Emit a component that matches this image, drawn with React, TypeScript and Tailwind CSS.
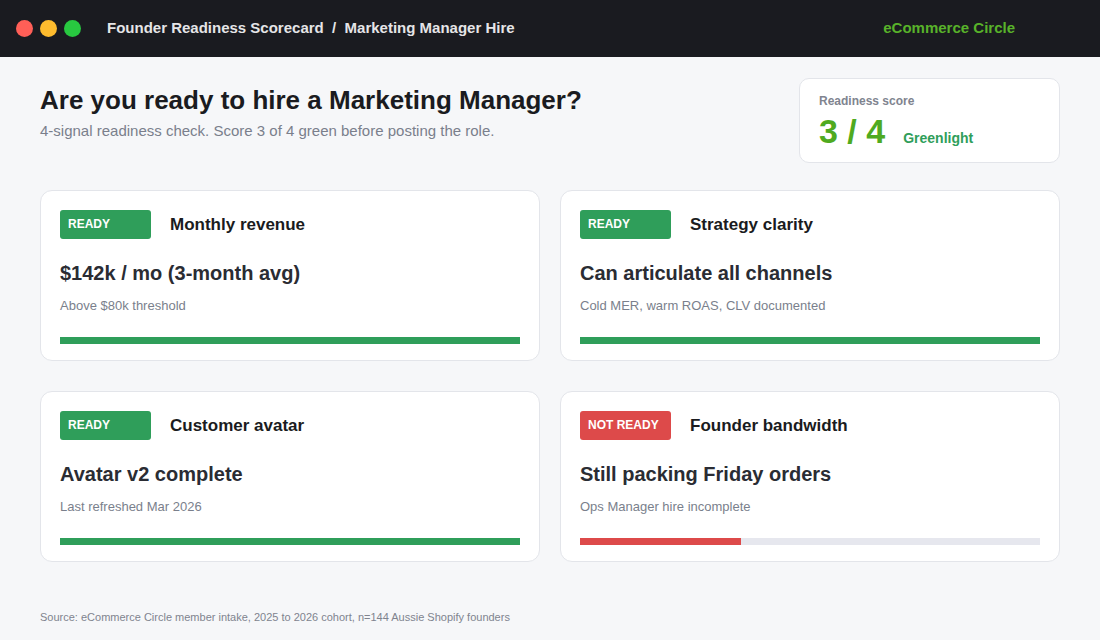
import React from "react";

const cards = [
  { ok: true, title: "Monthly revenue", value: "$142k / mo (3-month avg)", sub: "Above $80k threshold", pct: 100 },
  { ok: true, title: "Strategy clarity", value: "Can articulate all channels", sub: "Cold MER, warm ROAS, CLV documented", pct: 100 },
  { ok: true, title: "Customer avatar", value: "Avatar v2 complete", sub: "Last refreshed Mar 2026", pct: 100 },
  { ok: false, title: "Founder bandwidth", value: "Still packing Friday orders", sub: "Ops Manager hire incomplete", pct: 35 },
];

export default function App() {
  return (
    <div className="w-[1100px] h-[640px] bg-[#f6f7f9] flex flex-col" style={{ fontFamily: '"Liberation Sans", Arial, sans-serif' }}>
      <div className="h-[57px] bg-[#1a1b20] flex items-center px-4 shrink-0">
        <div className="flex gap-[7px]">
          <span className="w-[17px] h-[17px] rounded-full bg-[#ff5f57]" />
          <span className="w-[17px] h-[17px] rounded-full bg-[#febc2e]" />
          <span className="w-[17px] h-[17px] rounded-full bg-[#28c840]" />
        </div>
        <div className="ml-[26px] text-[15px] font-bold text-[#e5e5e7]">Founder Readiness Scorecard&nbsp; /&nbsp; Marketing Manager Hire</div>
        <div className="ml-auto mr-[69px] text-[15px] font-bold text-[#58b22a]">eCommerce Circle</div>
      </div>
      <div className="px-10 flex-1 flex flex-col">
        <div className="flex justify-between mt-[21px]">
          <div className="pt-[6px]">
            <div className="text-[26px] font-bold text-[#1a1b20] leading-[32px]">Are you ready to hire a Marketing Manager?</div>
            <div className="text-[15px] text-[#7a7f8c] mt-[4px]">4-signal readiness check. Score 3 of 4 green before posting the role.</div>
          </div>
          <div className="w-[261px] h-[85px] bg-white border border-[#e3e5ea] rounded-[10px] px-[19px] pt-[13px]">
            <div className="text-[12px] font-bold text-[#80848f]">Readiness score</div>
            <div className="flex items-baseline mt-[1px]">
              <span className="text-[34px] font-bold text-[#4faa20] leading-[40px]">3 / 4</span>
              <span className="ml-[18px] text-[14px] font-bold text-[#2f9e5a]">Greenlight</span>
            </div>
          </div>
        </div>
        <div className="grid grid-cols-2 gap-x-5 gap-y-[30px] mt-[27px]">
          {cards.map((c) => (
            <div key={c.title} className="h-[171px] bg-white border border-[#e3e5ea] rounded-[12px] px-[19px] pt-[19px]">
              <div className="flex items-center">
                <div className={`w-[91px] h-[29px] rounded-[3px] text-white text-[12px] font-bold px-2 pt-[5px] ${c.ok ? "bg-[#2f9e5a]" : "bg-[#dd4a4a]"}`}>{c.ok ? "READY" : "NOT READY"}</div>
                <div className="ml-[19px] text-[17px] font-bold text-[#1a1b20]">{c.title}</div>
              </div>
              <div className="mt-[19px] text-[20px] font-bold text-[#2a2c33]">{c.value}</div>
              <div className="mt-[8px] text-[13px] text-[#7a7f8c]">{c.sub}</div>
              <div className="mt-[21px] h-[7px] bg-[#e6e7ee]">
                <div className={`h-full ${c.ok ? "bg-[#2f9e5a]" : "bg-[#dd4a4a]"}`} style={{ width: `${c.pct}%` }} />
              </div>
            </div>
          ))}
        </div>
        <div className="mt-auto mb-[15px] text-[11px] text-[#80848f]">Source: eCommerce Circle member intake, 2025 to 2026 cohort, n=144 Aussie Shopify founders</div>
      </div>
    </div>
  );
}
